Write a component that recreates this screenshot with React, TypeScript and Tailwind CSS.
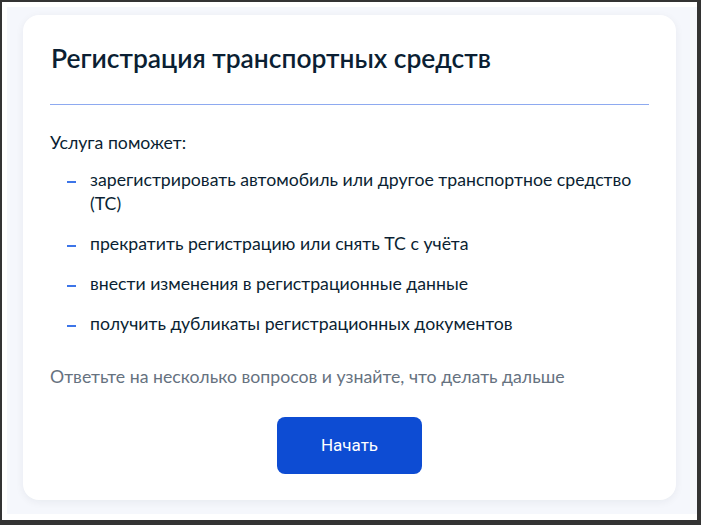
import React from 'react';

const items: string[][] = [
  ['зарегистрировать автомобиль или другое транспортное средство', '(ТС)'],
  ['прекратить регистрацию или снять ТС с учёта'],
  ['внести изменения в регистрационные данные'],
  ['получить дубликаты регистрационных документов'],
];

const ServiceCard: React.FC = () => (
  <div className="flex-1 rounded-2xl bg-white px-[27px] pt-[27px] shadow-[0_2px_8px_rgba(11,31,51,0.06)]">
    <h1 className="pl-[1px] text-[26.4px] font-semibold leading-[32px] text-[#0b1f33]">Регистрация транспортных средств</h1>
    <div className="mt-[30px] h-px bg-[#8eaaf0]" />
    <p className="mt-[26px] text-[17.7px] leading-[24px] text-[#0b1f33]">Услуга поможет:</p>
    <ul className="mt-[13px] flex flex-col gap-[16px] pl-[17px]">
      {items.map((lines) => (
        <li key={lines[0]} className="flex text-[17.7px] leading-[24px] text-[#0b1f33]">
          <span className="mt-[13px] mr-[14px] h-[2px] w-[9px] flex-shrink-0 bg-[#3d75e8]" />
          <span>
            {lines.map((l) => (
              <span key={l} className="block">{l}</span>
            ))}
          </span>
        </li>
      ))}
    </ul>
    <p className="mt-[29px] text-[17.7px] leading-[24px] text-[#66727f]">Ответьте на несколько вопросов и узнайте, что делать дальше</p>
    <div className="mt-[28px] flex justify-center">
      <button className="h-[57px] w-[145px] rounded-lg bg-[#0d4cd3] text-[17px] text-white [font-family:Roboto,sans-serif]">Начать</button>
    </div>
  </div>
);

export default function App() {
  return (
    <div className="flex h-[525px] w-[701px] bg-[#333333] pt-[2px] pr-[4px] pb-[5px] pl-[2px] [font-family:Lato,'Noto_Sans',sans-serif]">
      <div className="flex flex-1 bg-white pt-[5px] pb-[6px] pl-[5px]">
        <div className="flex flex-1 bg-[#f5f7fc] pt-[8px] pr-[21px] pb-[14px] pl-[16px]">
          <ServiceCard />
        </div>
      </div>
    </div>
  );
}
